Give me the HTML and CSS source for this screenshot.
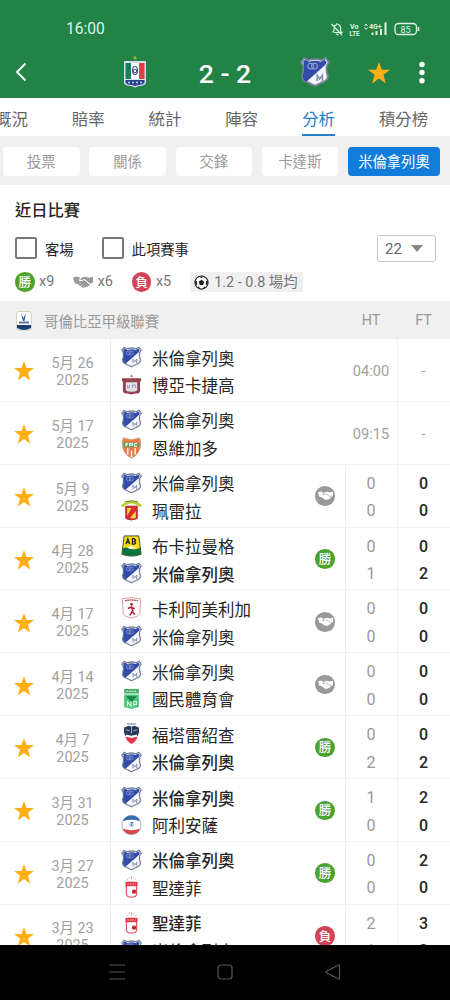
FILE: index.html
```html
<!DOCTYPE html>
<html lang="zh-Hant">
<head>
    <meta charset="UTF-8">
    <meta name="viewport" content="width=device-width, initial-scale=1.0">
    <title>近日比賽</title>
    <link rel="stylesheet" href="styles.css">
</head>
<body>

    <!-- Shared icons -->
    <svg class="sprite" xmlns="http://www.w3.org/2000/svg">
        <defs>
            <symbol id="star" viewBox="0 0 20 20">
                <path d="M10 0l2.500 7H20l-6 4.700 2.200 7.800L10 15l-6.200 4.500L6 11.700 0 7h7.500z"/>
            </symbol>
            <symbol id="hands" viewBox="0 0 22 14">
                <path d="M0 1.500l4-1 4 1.200L6.500 4.500q1.500 2 4 .3l1.700-.5 6 4.700c.8.900-.2 2.200-1.400 1.500.1 1.200-1 1.600-1.900 1-.3 1.100-1.500 1.300-2.300.6-.8.900-1.800.7-2.500 0L4.500 8.500 2 8z"/>
                <path d="M7.700 3.800L10.800 1l3.200-.3 3.500 1L22 .8V7l-2.800 1.500-6.500-5.200-2.500.8q-1.500 1-2.500-.3z"/>
                <path class="gap" d="M9 4.900q1.500.2 3.200-1.200l6.500 5.200M7 9l1.700-1.500M9 10.700l1.700-1.600M11.200 12l1.500-1.500"/>
            </symbol>
            <symbol id="millonarios" viewBox="0 0 28 28">
                <path d="M4 1l4 2q6-2 12 0l4-2 3 4-2 3q-1 5 1 10 0 4-6 6l-6 3-6-3q-6-2-6-6 2-5 1-10L1 5z" fill="#f6f7fc" stroke="#7a8499" stroke-width="1.700"/>
                <path d="M3 4l2-1.500L8.500 4.500q5.500-2 11 0L23 2.500 25 5l-1.500 2.500L6 23q-3.500-1.500-3.500-5 2-5 1-10.500z" fill="#334ca6"/>
                <g fill="none" stroke="#8fa0d6" stroke-width="1"><circle cx="10" cy="8.500" r="2.700"/><circle cx="13.500" cy="8.500" r="2.700"/></g>
                <path d="M16 22.500V17l2.500 3.500L21 17v5.500" fill="none" stroke="#7d89ab" stroke-width="1.300"/>
            </symbol>
            <symbol id="once" viewBox="0 0 24 32">
                <circle cx="12" cy="2" r="1.700" fill="#9cad27"/>
                <path d="M1 5h22v22q-1 3-7 3l-4 1.500L8 30q-6 0-7-3z" fill="#d8dceb"/>
                <path d="M2.500 7H8v16H2.500z" fill="#16805a"/>
                <path d="M8 7h8v16H8z" fill="#fff"/>
                <path d="M16 7h5.500v16H16z" fill="#e33d46"/>
                <path d="M2.500 24h19v3q-2 2-6 2l-3.500 1-3.500-1q-4 0-6-2z" fill="#27418f"/>
                <g fill="none" stroke="#47547f" stroke-width="1.100"><ellipse cx="12" cy="14.500" rx="2.500" ry="4"/><circle cx="12" cy="15" r="1.700"/></g>
                <path d="M5 26.500h14" stroke="#c7d0ed" stroke-width="1.600" stroke-dasharray="2 2"/>
            </symbol>
            <symbol id="boyaca" viewBox="0 0 22 22">
                <path d="M11 0l1.500 2-1.500 1-1.500-1z" fill="#b78042"/>
                <path d="M1 4h20v3h-1v10q0 3-5 3l-4 1-4-1q-5 0-5-3V7H1z" fill="#92424d"/>
                <path d="M5 8h12v8q0 2-6 2t-6-2z" fill="#dfe0e8"/>
                <path d="M7 11v3h2v-3m3 3v-3h3v3" fill="none" stroke="#9b94b7"/>
            </symbol>
            <symbol id="envigado" viewBox="0 0 22 24">
                <path d="M2 1l9 2 9-2 1 6q0 11-10 16Q1 18 1 7z" fill="#f37a45" stroke="#b9a180"/>
                <path d="M3 6h16v5H3z" fill="#55a667"/>
                <path d="M5 10V7h2m-2 1.500h2m2 1.500V7h3v2H9m8-2h-2.500v3H17" fill="none" stroke="#fff" stroke-width="1.100"/>
                <path d="M7 12v7m4-4v7m4-10v7" stroke="#fff" stroke-width="1.500"/>
            </symbol>
            <symbol id="pereira" viewBox="0 0 22 22">
                <path d="M1 7q10-9 20 0" fill="none" stroke="#bcd032" stroke-width="3"/>
                <path d="M4 2.500q7-2 14 0" fill="none" stroke="#5c873a"/>
                <path d="M5 7h12v13q-6 3-12 0z" fill="#d92d34" stroke="#a32b2d"/>
                <path d="M6.500 9H11l-4.500 8zM15.500 12v7q-3 1.500-6 .5z" fill="#ffd443"/>
            </symbol>
            <symbol id="bucaramanga" viewBox="0 0 22 24">
                <path d="M3 1h16l2.500 20q-10 4-21 0z" fill="#f7dc16" stroke="#34472a"/>
                <path d="M1 15q5-3 9 0 4 2 11-1v7q-10 4-20 0z" fill="#08713f"/>
                <path d="M5 10l2-6 2 6M5.700 8H8m4-4v6h2q3-1 0-3 3-1 0-3z" fill="none" stroke="#222" stroke-width="1.400"/>
                <path d="M6 14l4-2 3 1 4-2-4 4H9z" fill="#fff"/>
            </symbol>
            <symbol id="america" viewBox="0 0 22 24">
                <path d="M1 2q10-3 20 0l-1 16q-1 3-9 5-8-2-9-5z" fill="#fff" stroke="#df8f94"/>
                <path d="M4 4q7-1.500 14 0" fill="none" stroke="#b94c4c" stroke-width="1.500" stroke-dasharray="2 .5"/>
                <circle cx="11" cy="8" r="1.500" fill="#a31c2c"/>
                <path d="M10.500 10l2 5-3.500 5m2-5l3.500 4M7 12.500l4-1.500 3.500 2" fill="none" stroke="#b62433" stroke-width="1.700"/>
            </symbol>
            <symbol id="nacional" viewBox="0 0 20 24">
                <path d="M2 1h16v5H2z" fill="#4aac6a"/>
                <path d="M4 3.500h12" stroke="#fff" stroke-dasharray="2 1"/>
                <path d="M2 7h16v14q-4 0-8 2-4-2-8-2z" fill="#49c578"/>
                <path d="M4 9h12l-6 6z" fill="#14804a"/>
                <path d="M5.500 20v-5l4 5v-5m3 5v-5h3v3h-3" fill="none" stroke="#e5fff0" stroke-width="1.100"/>
            </symbol>
            <symbol id="fortaleza" viewBox="0 0 20 24">
                <path d="M5 1h10" stroke="#8a9cc0" stroke-width="1.500"/>
                <path d="M2 5l5-2 3 1 3-1 5 2q1 5-1 9H3Q1 10 2 5z" fill="#293858"/>
                <path d="M4 7.500l4 1m8-1l-4 1m-2-4v7" fill="none" stroke="#a4bedf"/>
                <path d="M3.500 15l6.500 1 6.500-1q-1 5-6.500 8-5.500-3-6.500-8z" fill="#e53749"/>
                <path d="M4 13.500l6 1.500 6-1.500" fill="none" stroke="#fff" stroke-width="1.800"/>
            </symbol>
            <symbol id="alianza" viewBox="0 0 22 22">
                <circle cx="11" cy="11" r="10" fill="#fff" stroke="#9db4ca"/>
                <path d="M2 7q2-6 9-6t9 6q-9-3-18 0z" fill="#386cac"/>
                <path d="M2 15q9 3 18 0-2 6-9 6t-9-6z" fill="#d54a4d"/>
                <circle cx="11" cy="10.500" r="2.500" fill="#b4d1eb"/>
                <path d="M10 8.500h2.500l-2 2.500 1 1.500" fill="none" stroke="#3f7ebb"/>
            </symbol>
            <symbol id="santafe" viewBox="0 0 18 26">
                <path d="M3 5l2-1m1-1l1-2m2 3V0m2 3l1-2m1 3l2 1M5 7h8" fill="none" stroke="#e59a96"/>
                <path d="M3 8h12v14q-1 3-6 3t-6-3z" fill="#fff" stroke="#df5962" stroke-width="1.500"/>
                <path d="M2 7h14v5H2z" fill="#dc3641"/>
                <path d="M4 9.500h10" stroke="#ffd3d3" stroke-dasharray="2 1"/>
                <circle cx="12" cy="18.500" r="2.500" fill="#c7212d"/>
            </symbol>
        </defs>
    </svg>

    <div class="app">
        <header class="header">
            <div class="status-bar">
                <span class="clock">16:00</span>
                <svg class="status-icons" viewBox="0 0 92 16" fill="none" stroke="#dcf5e2">
                    <path d="M2.500 11.500l1.500-2V7q0-3 3-3.500V2m1 1.500q2.500.5 2.500 3.500v2.500l1.500 2H4m2 1.500q1.500 1.200 2.500 0M1.500 3l10.500 11" stroke-width="1.200"/>
                    <text x="20" y="7.500" class="tiny">Vo</text>
                    <text x="19.500" y="14.500" class="tiny" textLength="10" lengthAdjust="spacingAndGlyphs">LTE</text>
                    <path d="M34.500 5l1.500-2 1.500 2m-3 1.500l1.500 2 1.500-2" stroke-width="1"/>
                    <text x="39" y="7.500" class="tiny">4G+</text>
                    <path d="M42.500 14v-2.500m4 2.500V10m4.500 4V8m4.500 6V1.500" stroke-width="2"/>
                    <rect x="65" y="2.500" width="21.500" height="11" rx="3.500" stroke-width="1.300"/>
                    <path d="M88.500 6v4" stroke-width="1.600"/>
                    <text x="70.500" y="11.500" class="battery">85</text>
                </svg>
            </div>
            <div class="match-bar">
                <svg class="back" viewBox="0 0 12 20"><path d="M10.500 1.500L2 10l8.500 8.500" fill="none" stroke="#fff" stroke-width="1.800"/></svg>
                <svg class="home-crest"><use href="#once"/></svg>
                <span class="score">2 - 2</span>
                <svg class="away-crest"><use href="#millonarios"/></svg>
                <svg class="header-star"><use href="#star"/></svg>
                <svg class="more" viewBox="0 0 6 22" fill="#fff"><circle cx="3" cy="3" r="2.700"/><circle cx="3" cy="11" r="2.700"/><circle cx="3" cy="19.300" r="2.700"/></svg>
            </div>
        </header>

        <nav class="tabs">
            <span>概況</span>
            <span>賠率</span>
            <span>統計</span>
            <span>陣容</span>
            <span class="active">分析</span>
            <span>積分榜</span>
        </nav>

        <div class="pills">
            <span>投票</span>
            <span>關係</span>
            <span>交鋒</span>
            <span>卡達斯</span>
            <span class="active">米倫拿列奧</span>
        </div>

        <section class="filters">
            <h2>近日比賽</h2>
            <div class="options">
                <label class="option"><i class="box"></i>客場</label>
                <label class="option"><i class="box"></i>此項賽事</label>
                <span class="select">22<i class="caret"></i></span>
            </div>
            <div class="summary">
                <span class="sum-item"><b class="badge win">勝</b>x9</span>
                <span class="sum-item"><svg class="hands"><use href="#hands"/></svg>x6</span>
                <span class="sum-item"><b class="badge lose">負</b>x5</span>
                <span class="average">
                    <svg class="ball" viewBox="0 0 16 16"><circle cx="8" cy="8" r="7" fill="#fff" stroke="#222" stroke-width="1.200"/><path d="M8 5l3 2.200-1.200 3.500H6.200L5 7.200zM5 1.500h6L8 3.300zM1 6l2 .5.500 3L2 11.500zm14 0l-2 .5-.5 3L14 11.500zM5.200 12l1.300 2.700L4 13.600zm5.600 0l-1.300 2.700 2.500-1.100z" fill="#222"/></svg>
                    1.2 - 0.8 場均
                </span>
            </div>
        </section>

        <div class="league">
            <svg class="league-logo" viewBox="0 0 16 20"><rect x=".5" y=".5" width="15" height="18.500" rx="2" fill="#fff" stroke="#d5d3ba"/><path d="M5 3l2.500 4L10 2 8.500 10H7z" fill="#315e8b"/><path d="M3 11.500h10" stroke="#54779e" stroke-width="2"/><path d="M1 14h14v3q-7 4-14 0z" fill="#173e70"/></svg>
            <span class="league-name">哥倫比亞甲級聯賽</span>
            <span class="col-ht">HT</span>
            <span class="col-ft">FT</span>
        </div>

        <main class="matches">
            <div class="match upcoming">
                <svg class="star"><use href="#star"/></svg>
                <div class="date">5月 26<br>2025</div>
                <div class="teams">
                    <div class="team"><svg><use href="#millonarios"/></svg>米倫拿列奧</div>
                    <div class="team"><svg><use href="#boyaca"/></svg>博亞卡捷高</div>
                </div>
                <div class="result"></div>
                <div class="ht"><span>04:00</span></div>
                <div class="ft"><span>-</span></div>
            </div>
            <div class="match upcoming">
                <svg class="star"><use href="#star"/></svg>
                <div class="date">5月 17<br>2025</div>
                <div class="teams">
                    <div class="team"><svg><use href="#millonarios"/></svg>米倫拿列奧</div>
                    <div class="team"><svg><use href="#envigado"/></svg>恩維加多</div>
                </div>
                <div class="result"></div>
                <div class="ht"><span>09:15</span></div>
                <div class="ft"><span>-</span></div>
            </div>
            <div class="match">
                <svg class="star"><use href="#star"/></svg>
                <div class="date">5月 9<br>2025</div>
                <div class="teams">
                    <div class="team"><svg><use href="#millonarios"/></svg>米倫拿列奧</div>
                    <div class="team"><svg><use href="#pereira"/></svg>珮雷拉</div>
                </div>
                <div class="result"><b class="badge draw"><svg><use href="#hands"/></svg></b></div>
                <div class="ht"><span>0</span><span>0</span></div>
                <div class="ft"><span>0</span><span>0</span></div>
            </div>
            <div class="match">
                <svg class="star"><use href="#star"/></svg>
                <div class="date">4月 28<br>2025</div>
                <div class="teams">
                    <div class="team"><svg><use href="#bucaramanga"/></svg>布卡拉曼格</div>
                    <div class="team winner"><svg><use href="#millonarios"/></svg>米倫拿列奧</div>
                </div>
                <div class="result"><b class="badge win">勝</b></div>
                <div class="ht"><span>0</span><span>1</span></div>
                <div class="ft"><span>0</span><span>2</span></div>
            </div>
            <div class="match">
                <svg class="star"><use href="#star"/></svg>
                <div class="date">4月 17<br>2025</div>
                <div class="teams">
                    <div class="team"><svg><use href="#america"/></svg>卡利阿美利加</div>
                    <div class="team"><svg><use href="#millonarios"/></svg>米倫拿列奧</div>
                </div>
                <div class="result"><b class="badge draw"><svg><use href="#hands"/></svg></b></div>
                <div class="ht"><span>0</span><span>0</span></div>
                <div class="ft"><span>0</span><span>0</span></div>
            </div>
            <div class="match">
                <svg class="star"><use href="#star"/></svg>
                <div class="date">4月 14<br>2025</div>
                <div class="teams">
                    <div class="team"><svg><use href="#millonarios"/></svg>米倫拿列奧</div>
                    <div class="team"><svg><use href="#nacional"/></svg>國民體育會</div>
                </div>
                <div class="result"><b class="badge draw"><svg><use href="#hands"/></svg></b></div>
                <div class="ht"><span>0</span><span>0</span></div>
                <div class="ft"><span>0</span><span>0</span></div>
            </div>
            <div class="match">
                <svg class="star"><use href="#star"/></svg>
                <div class="date">4月 7<br>2025</div>
                <div class="teams">
                    <div class="team"><svg><use href="#fortaleza"/></svg>福塔雷紹查</div>
                    <div class="team winner"><svg><use href="#millonarios"/></svg>米倫拿列奧</div>
                </div>
                <div class="result"><b class="badge win">勝</b></div>
                <div class="ht"><span>0</span><span>2</span></div>
                <div class="ft"><span>0</span><span>2</span></div>
            </div>
            <div class="match">
                <svg class="star"><use href="#star"/></svg>
                <div class="date">3月 31<br>2025</div>
                <div class="teams">
                    <div class="team winner"><svg><use href="#millonarios"/></svg>米倫拿列奧</div>
                    <div class="team"><svg><use href="#alianza"/></svg>阿利安薩</div>
                </div>
                <div class="result"><b class="badge win">勝</b></div>
                <div class="ht"><span>1</span><span>0</span></div>
                <div class="ft"><span>2</span><span>0</span></div>
            </div>
            <div class="match">
                <svg class="star"><use href="#star"/></svg>
                <div class="date">3月 27<br>2025</div>
                <div class="teams">
                    <div class="team winner"><svg><use href="#millonarios"/></svg>米倫拿列奧</div>
                    <div class="team"><svg><use href="#santafe"/></svg>聖達菲</div>
                </div>
                <div class="result"><b class="badge win">勝</b></div>
                <div class="ht"><span>0</span><span>0</span></div>
                <div class="ft"><span>2</span><span>0</span></div>
            </div>
            <div class="match">
                <svg class="star"><use href="#star"/></svg>
                <div class="date">3月 23<br>2025</div>
                <div class="teams">
                    <div class="team winner"><svg><use href="#santafe"/></svg>聖達菲</div>
                    <div class="team"><svg><use href="#millonarios"/></svg>米倫拿列奧</div>
                </div>
                <div class="result"><b class="badge lose">負</b></div>
                <div class="ht"><span>2</span><span>1</span></div>
                <div class="ft"><span>3</span><span>2</span></div>
            </div>
        </main>

        <footer class="nav-bar">
            <svg viewBox="0 0 16 16"><path d="M0 1h16M0 8h16M0 15h16"/></svg>
            <svg viewBox="0 0 16 16"><rect x="1" y="1" width="14" height="14" rx="3"/></svg>
            <svg viewBox="0 0 16 16"><path d="M14.500 2v12q0 1.500-1.500.7L1.500 8.700Q.5 8 1.500 7.300L13 1.300q1.500-.8 1.500.7z"/></svg>
        </footer>
    </div>

</body>
</html>
```

FILE: styles.css
```css
/* Global Styles */
* {
    box-sizing: border-box;
}

body {
    margin: 0;
    background: #fff;
    color: #262626;
    font-family: Roboto, "Noto Sans CJK TC", sans-serif;
}

svg {
    display: block;
    flex: none;
}

.sprite {
    display: none;
}

.app {
    display: flex;
    flex-direction: column;
    width: 450px;
    height: 1000px;
    overflow: hidden;
}

/* Header */
.header {
    flex: none;
    height: 98px;
    background: #238347;
    color: #fff;
}

.status-bar {
    display: flex;
    align-items: center;
    justify-content: space-between;
    height: 46px;
    padding: 12px 28px 0 66px;
}

.clock {
    font-size: 15.6px;
    color: #dcf5e2;
}

.status-icons {
    width: 92px;
    height: 16px;
}

.tiny {
    font-size: 7px;
    font-weight: 700;
    fill: #dcf5e2;
    stroke: none;
}

.battery {
    font-size: 9px;
    fill: #dcf5e2;
    stroke: none;
}

.match-bar {
    display: flex;
    align-items: center;
    height: 52px;
    padding-left: 15px;
}

.back {
    width: 12px;
    height: 20px;
}

.home-crest {
    width: 24px;
    height: 32px;
    margin-left: 96px;
}

.score {
    width: 78px;
    margin: 3px 0 0 39px;
    text-align: center;
    font-size: 26.5px;
    font-weight: 500;
}

.away-crest {
    width: 30px;
    height: 30px;
    margin-left: 36px;
}

.header-star {
    width: 22px;
    height: 22px;
    margin: 1px 0 0 38px;
    fill: #ffae13;
}

.more {
    width: 6px;
    height: 23px;
    margin-left: 29px;
}

/* Tabs */
.tabs {
    display: flex;
    flex: none;
    gap: 44px;
    height: 38px;
    margin-left: -5px;
    font-size: 16.4px;
    line-height: 43px;
    color: #666;
    white-space: nowrap;
}

.tabs .active {
    height: 39px;
    color: #277fc9;
    border-bottom: 3px solid #277fc9;
}

.pills {
    display: flex;
    flex: none;
    gap: 9.7px;
    height: 49px;
    padding: 11px 10px 10px 3px;
    background: #f0f0f0;
    font-size: 14.3px;
    line-height: 30px;
    color: #999;
    text-align: center;
}

.pills span {
    width: 76.6px;
    height: 28.5px;
    border-radius: 4px;
    background: #fff;
}

.pills .active {
    width: 92px;
    background: #127cdb;
    color: #fff;
}

/* Filters */
.filters {
    flex: none;
    height: 116px;
    padding: 15px 14px 0 15px;
}

h2 {
    margin: 0;
    font-size: 16.3px;
    font-weight: 500;
    line-height: 22px;
}

.options {
    display: flex;
    align-items: center;
    height: 28px;
    margin-top: 12px;
    font-size: 14.3px;
}

.option {
    display: flex;
    align-items: center;
    gap: 8px;
    margin-right: 28px;
}

.box {
    width: 22px;
    height: 22px;
    border: 2px solid #777;
    border-radius: 2px;
}

.select {
    display: flex;
    align-items: center;
    justify-content: space-between;
    width: 59px;
    height: 27px;
    margin-left: auto;
    padding: 1px 12px 0 7px;
    border: 1px solid #c8c8c8;
    border-radius: 3px;
    font-size: 15px;
    color: #666;
}

.caret {
    border: 6px solid transparent;
    border-top: 7px solid #888;
    border-bottom: 0;
}

.summary {
    display: flex;
    align-items: center;
    gap: 19px;
    margin-top: 10px;
    font-size: 14.4px;
    line-height: 20px;
    color: #777;
}

.sum-item {
    display: flex;
    align-items: center;
    gap: 4.5px;
}

.hands {
    width: 20px;
    height: 13px;
    fill: #999;
}

.gap {
    fill: none;
    stroke: #fff;
    stroke-width: .6;
}

.average {
    display: flex;
    align-items: center;
    gap: 5px;
    height: 20px;
    padding: 1px 5px 0 4px;
    border-radius: 2px;
    background: #f0f0f0;
}

.ball {
    width: 15px;
    height: 15px;
}

.badge {
    display: flex;
    align-items: center;
    justify-content: center;
    width: 19.5px;
    height: 19.5px;
    padding-top: 1px;
    border-radius: 50%;
    color: #fff;
    font-size: 12.5px;
    font-weight: 500;
    line-height: 19px;
}

.win {
    background: #4ca22f;
}

.lose {
    background: #d14556;
}

.draw {
    padding-top: 0;
    background: #999;
}

.draw svg {
    width: 15px;
    height: 10px;
    fill: #fff;
}

/* League header */
.league {
    display: flex;
    align-items: center;
    flex: none;
    height: 38px;
    padding: 1px 0 0 16px;
    background: #f0f0f0;
    color: #999;
    font-size: 14.4px;
}

.league-logo {
    width: 16px;
    height: 20px;
}

.league-name {
    flex: 1;
    margin-left: 12px;
}

.col-ht {
    width: 52px;
    text-align: center;
}

.col-ft {
    width: 53px;
    text-align: center;
}

/* Match list */
.matches {
    flex: 1;
    min-height: 0;
    overflow: hidden;
}

.match {
    display: grid;
    grid-template-columns: 48px 62px 195px 41px 52px 52px;
    height: 62.85px;
    border-bottom: 1px solid #f3f3f3;
}

.star {
    width: 20px;
    height: 20px;
    margin: 22.3px 0 0 14px;
    fill: #ffae13;
}

.date {
    padding: 15.9px 13px 0 0;
    text-align: center;
    white-space: nowrap;
    font-size: 14.4px;
    line-height: 17px;
    color: #a0a0a0;
}

.teams {
    padding: 4.8px 0 0 10px;
    border-left: 1px solid #eee;
}

.team {
    display: flex;
    align-items: center;
    gap: 10px;
    height: 27.6px;
    font-size: 16.5px;
    white-space: nowrap;
}

.team svg {
    width: 21px;
    height: 22px;
    margin-bottom: 1px;
}

.winner {
    font-weight: 500;
}

.result {
    display: flex;
    align-items: center;
    justify-content: center;
    padding-top: 1px;
    border-right: 1px solid #eee;
}

.ht,
.ft {
    display: flex;
    flex-direction: column;
    padding: 5px 1px 0 0;
    text-align: center;
    font-size: 16px;
    line-height: 27.6px;
}

.ht {
    color: #999;
    border-right: 1px solid #f3f3f3;
}

.ft {
    font-weight: 500;
}

.upcoming .result {
    border-right-color: transparent;
}

.upcoming .ht,
.upcoming .ft {
    justify-content: center;
    padding-top: 4px;
    font-size: 14.6px;
    font-weight: 400;
    color: #a0a0a0;
}

/* System navigation */
.nav-bar {
    display: flex;
    flex: none;
    justify-content: center;
    gap: 92px;
    height: 55px;
    padding-top: 19px;
    background: #000;
}

.nav-bar svg {
    width: 16px;
    height: 16px;
    fill: none;
    stroke: #555;
    stroke-width: 1.2;
}
```
